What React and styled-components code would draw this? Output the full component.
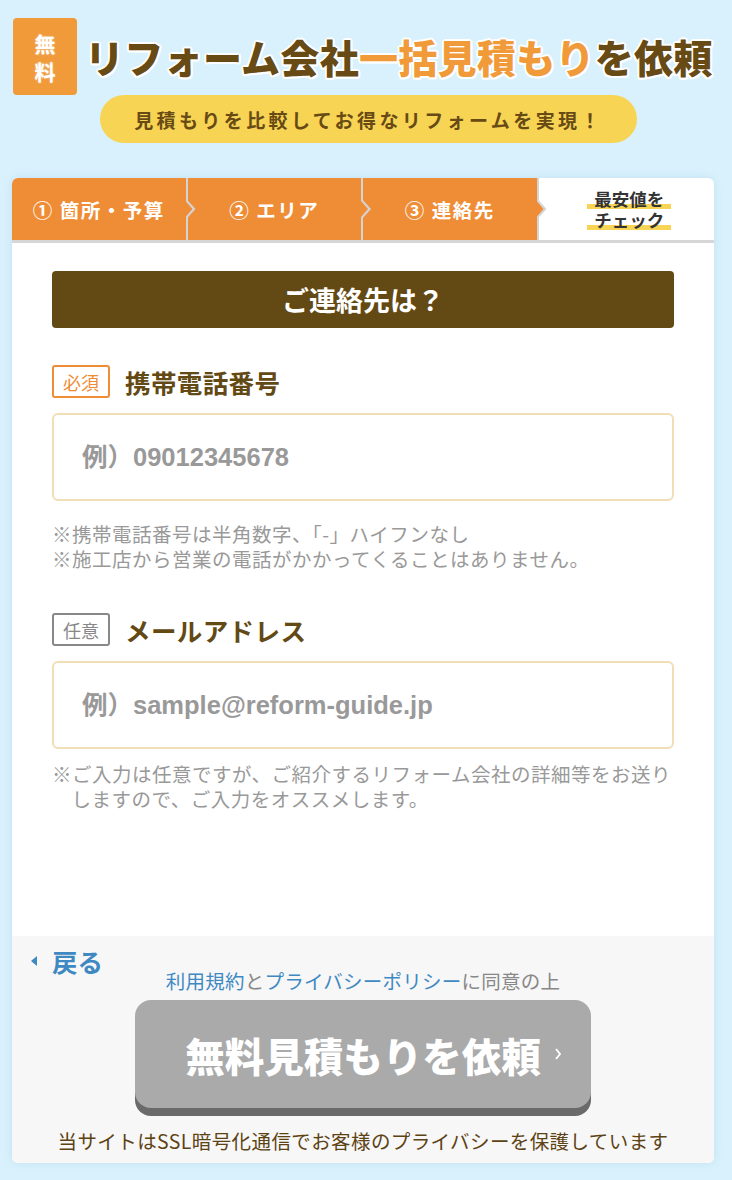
import React from 'react';
import styled, { createGlobalStyle, css } from 'styled-components';

const GlobalStyle = createGlobalStyle`
  * { box-sizing: border-box; }
  body {
    margin: 0;
    background: #d9f1fc;
    font-family: "Noto Sans CJK JP", "Noto Sans", sans-serif;
    color: #333;
  }
`;

const steps = [
  { label: '① 箇所・予算' },
  { label: '② エリア' },
  { label: '③ 連絡先' },
];

export default function App() {
  return (
    <>
      <GlobalStyle />
      <Page>
        <Header>
          <TitleRow>
            <FreeBadge>
              <span>無</span>
              <span>料</span>
            </FreeBadge>
            <Title>
              リフォーム会社<Accent>一括見積もり</Accent>を依頼
            </Title>
          </TitleRow>
          <PillRow>
            <Pill>見積もりを比較してお得なリフォームを実現！</Pill>
          </PillRow>
        </Header>

        <Card>
          <StepBar>
            {steps.map((step) => (
              <Step key={step.label}>{step.label}</Step>
            ))}
            <FinalStep>
              <Marker>最安値を</Marker>
              <Marker>チェック</Marker>
            </FinalStep>
          </StepBar>

          <Body>
            <SectionTitle>ご連絡先は？</SectionTitle>

            <Field $top={37}>
              <LabelRow>
                <Tag $required>必須</Tag>
                <Label>携帯電話番号</Label>
              </LabelRow>
              <TextInput type='tel' placeholder='例）09012345678' />
              <Notes $top={20}>
                <li>※携帯電話番号は半角数字、「-」ハイフンなし</li>
                <li>※施工店から営業の電話がかかってくることはありません。</li>
              </Notes>
            </Field>

            <Field $top={42}>
              <LabelRow>
                <Tag>任意</Tag>
                <Label>メールアドレス</Label>
              </LabelRow>
              <TextInput type='email' placeholder='例）sample@reform-guide.jp' />
              <Notes $top={12}>
                <li>※ご入力は任意ですが、ご紹介するリフォーム会社の詳細等をお送りしますので、ご入力をオススメします。</li>
              </Notes>
            </Field>
          </Body>

          <Footer>
            <BackLink href='#'>
              <svg width='6' height='10' viewBox='0 0 6 10'>
                <path d='M6 0 L0 5 L6 10 Z' fill='#3f89c3' />
              </svg>
              戻る
            </BackLink>
            <Agreement>
              <a href='#'>利用規約</a>と<a href='#'>プライバシーポリシー</a>に同意の上
            </Agreement>
            <SubmitButton type='button'>
              無料見積もりを依頼
              <svg width='6' height='12' viewBox='0 0 6 12'>
                <path d='M1 1 L5 6 L1 11' fill='none' stroke='#fff' strokeWidth='1.8' />
              </svg>
            </SubmitButton>
            <SslNote>当サイトはSSL暗号化通信でお客様のプライバシーを保護しています</SslNote>
          </Footer>
        </Card>
      </Page>
    </>
  );
}

const Page = styled.div`
  padding: 18px 0 20px;
`;

const Header = styled.header`
  display: flex;
  flex-direction: column;
`;

const TitleRow = styled.div`
  display: flex;
  align-items: center;
  gap: 8px;
  padding-left: 13px;
`;

const FreeBadge = styled.div`
  display: flex;
  flex-direction: column;
  align-items: center;
  justify-content: center;
  width: 64px;
  height: 77px;
  border-radius: 4px;
  background: #f09a3a;
  color: #fff;
  font-size: 21px;
  font-weight: 700;
  line-height: 28px;
  text-shadow: 0 0 2px rgba(255, 255, 255, 0.6);
`;

const Title = styled.h1`
  margin: 0;
  font-size: 39px;
  font-weight: 900;
  line-height: 1;
  letter-spacing: 0.3px;
  color: #674a14;
  white-space: nowrap;
  text-shadow:
    2px 0 0 #fff, -2px 0 0 #fff, 0 2px 0 #fff, 0 -2px 0 #fff,
    1.5px 1.5px 0 #fff, -1.5px -1.5px 0 #fff, 1.5px -1.5px 0 #fff, -1.5px 1.5px 0 #fff;
`;

const Accent = styled.span`
  color: #f09a3a;
`;

const PillRow = styled.div`
  display: flex;
  justify-content: center;
  padding-left: 5px;
`;

const Pill = styled.p`
  display: flex;
  align-items: center;
  justify-content: center;
  width: 537px;
  height: 48px;
  margin: 0;
  border-radius: 24px;
  background: #f8d455;
  color: #674a14;
  font-size: 19px;
  font-weight: 700;
  letter-spacing: 3.4px;
`;

const Card = styled.main`
  width: 702px;
  margin: 35px 0 0 12px;
  border-radius: 6px;
  overflow: hidden;
  background: #fff;
  box-shadow: 0 0 10px rgba(70, 140, 180, 0.15);
`;

const StepBar = styled.nav`
  display: grid;
  grid-template-columns: repeat(4, 1fr);
  height: 65px;
  border-bottom: 3px solid #d6d6d6;
`;

const Step = styled.div`
  position: relative;
  display: flex;
  align-items: center;
  justify-content: center;
  background: #ef8d37;
  border-right: 2px solid #d4d4d4;
  color: #fff;
  font-size: 19.5px;
  font-weight: 700;
  letter-spacing: 1.5px;
  white-space: pre;

  &::before,
  &::after {
    content: '';
    position: absolute;
    left: 100%;
    top: 50%;
    z-index: 1;
    clip-path: polygon(0 0, 100% 50%, 0 100%);
  }
  &::before {
    width: 10px;
    height: 22px;
    margin-top: -11px;
    background: #d4d4d4;
  }
  &::after {
    width: 7px;
    height: 16px;
    margin-top: -8px;
    background: #ef8d37;
  }
`;

const FinalStep = styled.div`
  display: flex;
  flex-direction: column;
  align-items: center;
  justify-content: center;
  padding-left: 6px;
  color: #333;
  font-size: 17.5px;
  font-weight: 700;
  line-height: 21px;
`;

const Marker = styled.span`
  padding: 0 7px;
  background: linear-gradient(transparent 76%, #f8d455 76%);
`;

const Body = styled.section`
  padding: 28px 40px 125px;
`;

const SectionTitle = styled.h2`
  display: flex;
  align-items: center;
  justify-content: center;
  height: 57px;
  margin: 0;
  border-radius: 4px;
  background: #634914;
  color: #fff;
  font-size: 27px;
  font-weight: 700;
`;

const Field = styled.div`
  display: flex;
  flex-direction: column;
  margin-top: ${({ $top }) => $top}px;
`;

const LabelRow = styled.div`
  display: flex;
  align-items: center;
  gap: 15px;
  height: 33px;
`;

const Tag = styled.span`
  display: flex;
  align-items: center;
  justify-content: center;
  width: 58px;
  height: 33px;
  border: 2px solid #888;
  border-radius: 3px;
  color: #888;
  font-size: 18px;
  line-height: 1;
  background: #fff;

  ${({ $required }) =>
    $required &&
    css`
      border-color: #ef8d37;
      color: #ef8d37;
    `}
`;

const Label = styled.span`
  color: #634914;
  font-size: 25.5px;
  font-weight: 700;
  line-height: 1;
  letter-spacing: 0.4px;
`;

const TextInput = styled.input`
  width: 100%;
  height: 88px;
  margin-top: 15px;
  padding: 0 28px;
  border: 2px solid #f1deb6;
  border-radius: 6px;
  outline: none;
  font-family: "Liberation Sans", "Noto Sans CJK JP", sans-serif;
  font-size: 25.5px;
  font-weight: 700;
  color: #333;

  &::placeholder {
    color: #999;
  }
`;

const Notes = styled.ul`
  margin: ${({ $top }) => $top}px 0 0;
  padding: 0;
  list-style: none;
  color: #999;
  font-size: 19.5px;
  line-height: 25px;
  letter-spacing: 0.5px;

  li {
    padding-left: 1em;
    text-indent: -1em;
  }
`;

const Footer = styled.footer`
  position: relative;
  display: flex;
  flex-direction: column;
  align-items: center;
  padding: 32px 0 9px;
  background: #f7f7f7;
`;

const BackLink = styled.a`
  position: absolute;
  left: 19px;
  top: 6px;
  display: flex;
  align-items: center;
  gap: 15px;
  color: #3f89c3;
  font-size: 25.5px;
  font-weight: 700;
  text-decoration: none;
`;

const Agreement = styled.p`
  margin: 0;
  color: #888;
  font-size: 19.5px;
  line-height: 26px;
  letter-spacing: 0.25px;

  a {
    color: #3f89c3;
    text-decoration: none;
  }
`;

const SubmitButton = styled.button`
  display: flex;
  align-items: center;
  justify-content: center;
  gap: 14px;
  width: 456px;
  height: 108px;
  margin: 6px 0 8px;
  padding: 0 0 0 20px;
  border: none;
  border-radius: 16px;
  background: #aaaaaa;
  box-shadow: 0 8px 0 #6a6a6a;
  color: #fff;
  font-family: "Noto Sans CJK JP", sans-serif;
  font-size: 39.5px;
  font-weight: 900;
  cursor: pointer;
`;

const SslNote = styled.p`
  margin: 12px 0 0;
  color: #5d4214;
  font-size: 19.5px;
  line-height: 26px;
  letter-spacing: 0.4px;
`;
